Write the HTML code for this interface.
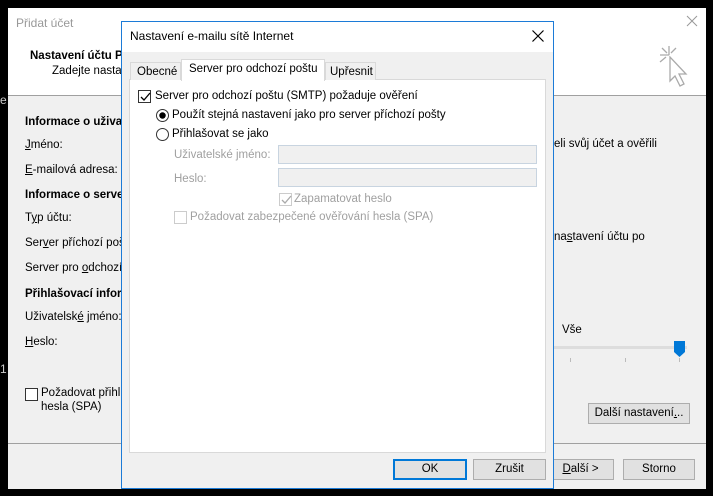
<!DOCTYPE html>
<html><head><meta charset="utf-8"><style>
*{box-sizing:border-box;margin:0;padding:0}
body{width:713px;height:496px;background:#000;position:relative;overflow:hidden;font-family:"Liberation Sans",sans-serif;font-size:11.5px;color:#000}
.a{position:absolute;white-space:nowrap;line-height:16px}
.btn{position:absolute;background:#e1e1e1;border:1px solid #adadad;text-align:center;line-height:19px}
.cb{position:absolute;width:13px;height:13px;border:1px solid #333;background:#fff}
.rb{position:absolute;width:13px;height:13px;border:1px solid #333;border-radius:50%;background:#fff}
.dis{color:#a0a0a0}
.inp{position:absolute;background:#f0f0f0;border:1px solid #c8d4e0}
</style></head><body>
<div class="a" style="left:8px;top:8px;width:698px;height:481px;background:#f0f0f0"></div>
<div class="a" style="left:8px;top:8px;width:698px;height:88px;background:#fff;border-bottom:1px solid #a0a0a0"></div>
<div class="a" style="left:16px;top:15px;color:#999;font-size:12px">Přidat účet</div>
<svg class="a" style="left:686px;top:15px" width="12" height="12"><path d="M1 1l10 10M11 1L1 11" stroke="#999" stroke-width="1"/></svg>
<div class="a" style="left:30px;top:48px;font-weight:bold">Nastavení účtu P</div>
<div class="a" style="left:52px;top:63px">Zadejte nastav</div>
<svg class="a" style="left:656px;top:42px" width="40" height="50"><g stroke="#aaa" fill="none" stroke-width="1.3"><path d="M13 4v9M4 13h9M6 6l5 5M20 6l-5 5M4 20l6-5"/><path d="M14 15v24l5-5 5 10 4-2-5-10h7z" fill="#fff"/></g></svg>
<div class="a" style="left:8px;top:443px;width:698px;height:1px;background:#a0a0a0"></div>
<div class="a" style="left:25px;top:114px;font-weight:bold">Informace o uživat</div>
<div class="a" style="left:25px;top:137px"><u>J</u>méno:</div>
<div class="a" style="left:25px;top:162px"><u>E</u>-mailová adresa:</div>
<div class="a" style="left:25px;top:187px;font-weight:bold">Informace o server</div>
<div class="a" style="left:25px;top:210px">T<u>y</u>p účtu:</div>
<div class="a" style="left:25px;top:235px">Ser<u>v</u>er příchozí poš</div>
<div class="a" style="left:25px;top:260px">Server pro <u>o</u>dchozí</div>
<div class="a" style="left:25px;top:286px;font-weight:bold">Přihlašovací inform</div>
<div class="a" style="left:25px;top:309px">Uživatelsk<u>é</u> jméno:</div>
<div class="a" style="left:25px;top:334px"><u>H</u>eslo:</div>
<div class="cb" style="left:25px;top:388px"></div>
<div class="a" style="left:41px;top:386px;line-height:14px">Požadovat přihl<br>hesla (SPA)</div>
<div class="a" style="left:554px;top:136px">eli svůj účet a ověřili</div>
<div class="a" style="left:554px;top:229px">na<u>s</u>tavení účtu po</div>
<div class="a" style="left:562px;top:322px">Vše</div>
<div class="a" style="left:553px;top:346px;width:134px;height:3px;background:#ddd"></div>
<div class="a" style="left:570px;top:358px;width:1px;height:4px;background:#bbb"></div>
<div class="a" style="left:625px;top:358px;width:1px;height:4px;background:#bbb"></div>
<div class="a" style="left:679px;top:358px;width:1px;height:4px;background:#bbb"></div>
<svg class="a" style="left:674px;top:341px" width="11" height="16"><path d="M0 0h11v11l-5.5 5L0 11z" fill="#0078d7"/></svg>
<div class="btn" style="left:588px;top:403px;width:102px;height:21px">Další nastavení<u>.</u>..</div>
<div class="btn" style="left:547px;top:459px;width:67px;height:21px"><u>D</u>alší &gt;</div>
<div class="btn" style="left:623px;top:459px;width:72px;height:21px">Storno</div>
<div class="a" style="left:0;top:92px;color:#ccc;font-size:12px">e</div>
<div class="a" style="left:0;top:361px;color:#ccc;font-size:12px">1</div>
<div class="a" style="left:121px;top:21px;width:433px;height:468px;background:#f0f0f0;border:1px solid #1c7bd7"></div>
<div class="a" style="left:122px;top:22px;width:431px;height:30px;background:#fff"></div>
<div class="a" style="left:130px;top:28px;font-size:12px">Nastavení e-mailu sítě Internet</div>
<svg class="a" style="left:532px;top:30px" width="12" height="12"><path d="M0.5 0.5l11 11M11.5 0.5l-11 11" stroke="#000" stroke-width="1.2"/></svg>
<div class="a" style="left:129px;top:79px;width:417px;height:374px;background:#fff;border:1px solid #d9d9d9"></div>
<div class="a" style="left:130px;top:62px;width:51px;height:18px;border:1px solid #d9d9d9;border-bottom:none;background:#f0f0f0;padding-left:6px;line-height:18px">Obecné</div>
<div class="a" style="left:181px;top:59px;width:144px;height:22px;border:1px solid #d9d9d9;border-bottom:none;background:#fff;padding-left:7px;line-height:18px">Server pro odchozí poštu</div>
<div class="a" style="left:325px;top:62px;width:51px;height:18px;border:1px solid #d9d9d9;border-bottom:none;background:#f0f0f0;padding-left:4px;line-height:18px">Upřesnit</div>
<div class="cb" style="left:138px;top:90px"></div>
<svg class="a" style="left:139px;top:91px" width="12" height="12"><path d="M2 6l3 3 6-7" stroke="#000" stroke-width="1.3" fill="none"/></svg>
<div class="a" style="left:155px;top:88px">Server pro odchozí poštu (SMTP) požaduje ověření</div>
<div class="rb" style="left:156px;top:109px"></div>
<div class="a" style="left:160px;top:113px;width:5px;height:5px;border-radius:50%;background:#000;transform:scale(1.3)"></div>
<div class="a" style="left:172px;top:107px">Použít stejná nastavení jako pro server příchozí pošty</div>
<div class="rb" style="left:156px;top:128px"></div>
<div class="a" style="left:172px;top:126px">Přihlašovat se jako</div>
<div class="a dis" style="left:174px;top:147px">Uživatelské jméno:</div>
<div class="inp" style="left:278px;top:145px;width:259px;height:19px"></div>
<div class="a dis" style="left:174px;top:171px">Heslo:</div>
<div class="inp" style="left:278px;top:168px;width:259px;height:19px"></div>
<div class="cb" style="left:279px;top:193px;border-color:#ccc"></div>
<svg class="a" style="left:280px;top:194px" width="12" height="12"><path d="M2 6l3 3 6-7" stroke="#aaa" stroke-width="1.3" fill="none"/></svg>
<div class="a dis" style="left:294px;top:191px">Zapamatovat heslo</div>
<div class="cb" style="left:174px;top:211px;border-color:#ccc"></div>
<div class="a dis" style="left:190px;top:209px">Požadovat zabezpečené ověřování hesla (SPA)</div>
<div class="btn" style="left:393px;top:459px;width:74px;height:21px;border:2px solid #0078d7;line-height:17px">OK</div>
<div class="btn" style="left:473px;top:459px;width:73px;height:21px">Zrušit</div>
</body></html>
